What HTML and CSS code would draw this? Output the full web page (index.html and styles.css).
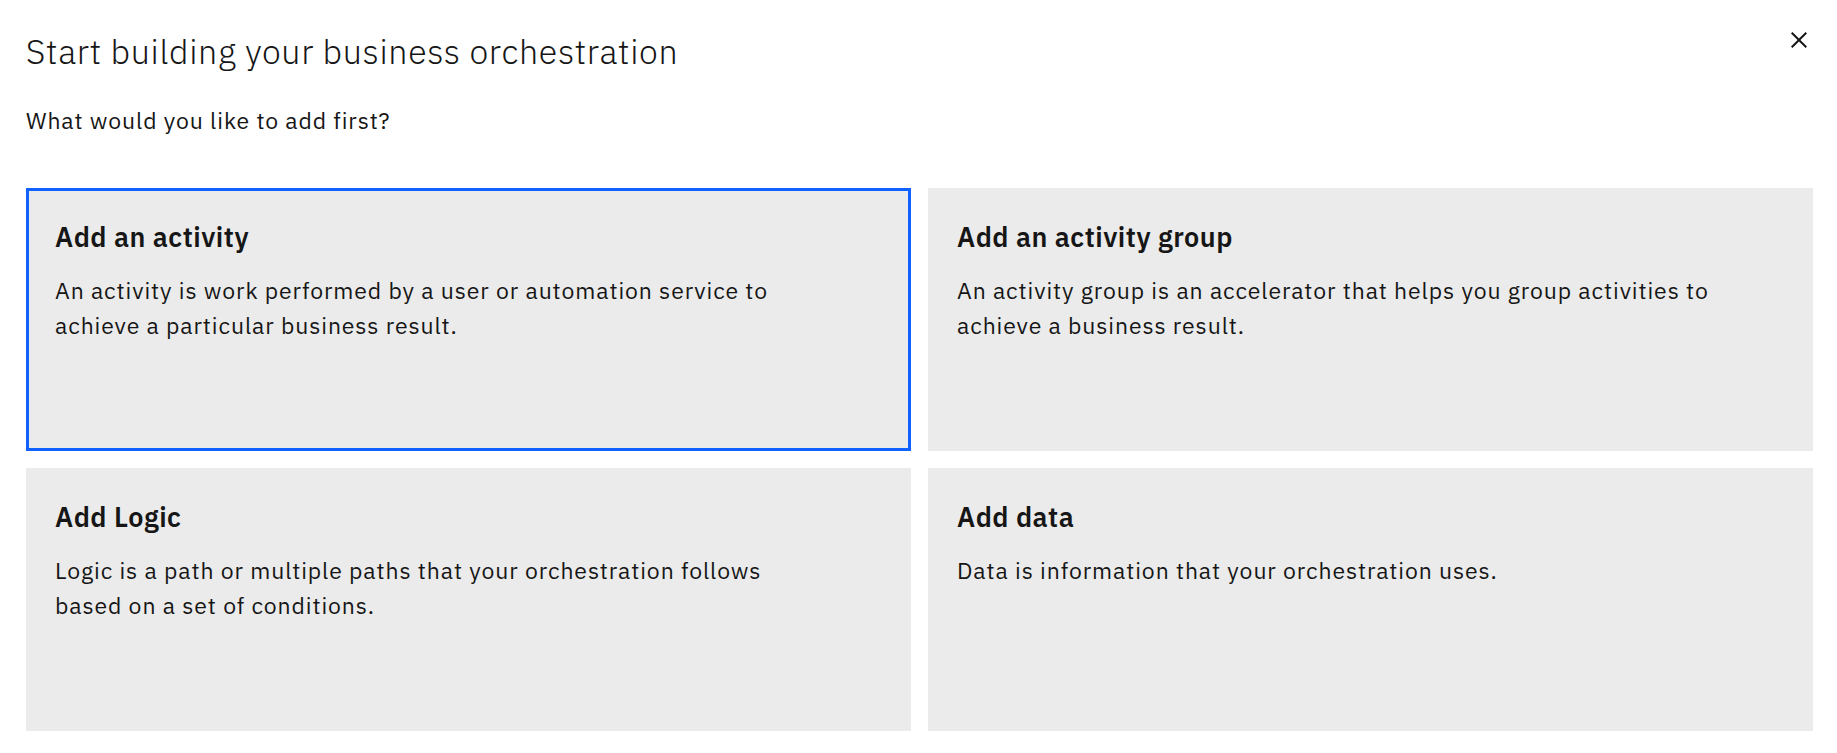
FILE: index.html
```html
<!DOCTYPE html>
<html lang="en">
<head>
<meta charset="utf-8">
<title>Start building your business orchestration</title>
<link rel="stylesheet" href="styles.css">
</head>
<body>
<div class="modal">
  <header class="modal-header">
    <h1 class="modal-title">Start building your business orchestration</h1>
    <p class="modal-subtitle">What would you like to add first?</p>
  </header>
  <button class="close-btn" type="button" aria-label="Close">
    <svg viewBox="0 0 32 32" width="32" height="32" aria-hidden="true">
      <path d="M24 9.4L22.6 8 16 14.6 9.4 8 8 9.4 14.6 16 8 22.6 9.4 24 16 17.4 22.6 24 24 22.6 17.4 16 24 9.4z" fill="#161616"/>
    </svg>
  </button>
  <div class="tiles">
    <div class="tile tile-selected">
      <h2 class="tile-title">Add an activity</h2>
      <p class="tile-text">An activity is work performed by a user or automation service to achieve a particular business result.</p>
    </div>
    <div class="tile">
      <h2 class="tile-title">Add an activity group</h2>
      <p class="tile-text">An activity group is an accelerator that helps you group activities to achieve a business result.</p>
    </div>
    <div class="tile">
      <h2 class="tile-title">Add Logic</h2>
      <p class="tile-text">Logic is a path or multiple paths that your orchestration follows based on a set of conditions.</p>
    </div>
    <div class="tile">
      <h2 class="tile-title">Add data</h2>
      <p class="tile-text">Data is information that your orchestration uses.</p>
    </div>
  </div>
</div>
</body>
</html>
```

FILE: styles.css
```css
* {
  box-sizing: border-box;
}

html, body {
  margin: 0;
  padding: 0;
  background: #ffffff;
}

body {
  font-family: "IBM Plex Sans", Roboto, "Liberation Sans", sans-serif;
  color: #161616;
}

.modal {
  position: relative;
  width: 1837px;
  height: 753px;
  padding: 29px 24px 0 26px;
}

.modal-header {
  display: flex;
  flex-direction: column;
}

.modal-title {
  margin: 0;
  font-size: 34px;
  line-height: 44px;
  font-weight: 300;
  letter-spacing: 0.65px;
}

.modal-subtitle {
  margin: 30px 0 0 0;
  font-size: 23px;
  line-height: 35px;
  font-weight: 400;
  letter-spacing: 0.9px;
}

.close-btn {
  position: absolute;
  top: 0;
  right: 0;
  width: 76px;
  height: 79px;
  border: 0;
  padding: 0;
  background: transparent;
  display: flex;
  align-items: center;
  justify-content: center;
  cursor: pointer;
}

.close-btn svg {
  display: block;
}

.tiles {
  margin-top: 50px;
  display: grid;
  grid-template-columns: 1fr 1fr;
  grid-auto-rows: 263px;
  gap: 17px;
}

.tile {
  background: #ebebeb;
  padding: 31px 28px 0 29px;
}

.tile-selected {
  outline: 3px solid #0f62fe;
  outline-offset: -3px;
}

.tile-title {
  margin: 0;
  font-size: 27px;
  line-height: 36px;
  font-weight: 600;
  letter-spacing: 0.5px;
}

.tile-text {
  margin: 18px 0 0 0;
  max-width: 775px;
  font-size: 23px;
  line-height: 35.4px;
  font-weight: 400;
  letter-spacing: 0.9px;
}
```
